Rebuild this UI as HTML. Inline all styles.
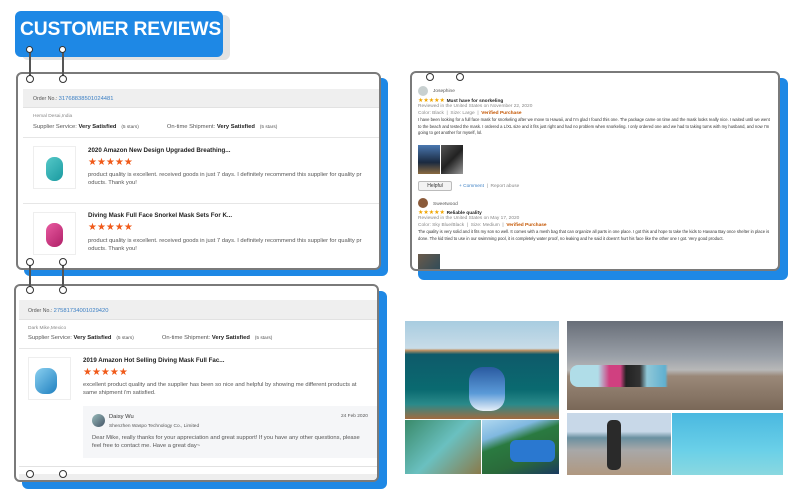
<!DOCTYPE html>
<html><head><meta charset="utf-8"><style>
*{margin:0;padding:0;box-sizing:border-box}
body{width:800px;height:503px;background:#fff;position:relative;overflow:hidden;font-family:"Liberation Sans",sans-serif;color:#333}
.a{position:absolute;white-space:nowrap}
.blue{position:absolute;background:#1e88e5;border-radius:6px}
.card{position:absolute;background:#fff;border:2px solid #7a7a7a;border-radius:6px;overflow:hidden}
.ring{position:absolute;width:8px;height:8px;border:1.5px solid #333;border-radius:50%;background:#fff}
.vl{position:absolute;width:1.5px;background:#555}
.st{color:#f05a1a;font-size:10px;letter-spacing:0px}
.ys{color:#f0a500;font-size:6px}
.t7{font-size:5.8px;color:#555}
.b7{font-size:6.2px;font-weight:bold;color:#222}
.s5{font-size:4.8px;color:#888}
.r5{font-size:4.2px;color:#333;line-height:6.7px;white-space:normal}
</style></head><body>

<!-- title -->
<div class="a" style="left:22px;top:15px;width:208px;height:45px;background:#e3e3e3;border-radius:6px"></div>
<div class="blue" style="left:15px;top:11px;width:208px;height:46px"></div>
<div class="a" style="left:20px;top:19px;font-size:19.3px;font-weight:bold;color:#fff;letter-spacing:-0.2px">CUSTOMER REVIEWS</div>

<!-- card 1 -->
<div class="blue" style="left:24px;top:78px;width:364px;height:198px"></div>
<div class="card" style="left:16px;top:72px;width:365px;height:198px">
  <div class="a" style="left:5px;top:15px;width:360px;height:19px;background:#efefef;border-bottom:1px solid #e2e2e2"></div>
  <div class="a t7" style="left:15px;top:22px;font-size:5.2px">Order No.: <span style="color:#3b7fc4;font-size:5.8px">31768838501024481</span></div>
  <div class="a s5" style="left:15px;top:40px">Hemal Desai,India</div>
  <div class="a t7" style="left:15px;top:50px">Supplier Service: <b style="color:#222">Very Satisfied</b> &nbsp; <span style="font-size:4.8px">(5 stars)</span><span style="margin-left:28px">On-time Shipment: <b style="color:#222">Very Satisfied</b> &nbsp; <span style="font-size:4.8px">(5 stars)</span></span></div>
  <div class="a" style="left:5px;top:63px;width:360px;height:1px;background:#e6e6e6"></div>
  <div class="a" style="left:15px;top:72px;width:43px;height:43px;border:1px solid #eee;background:#fff">
    <div class="a" style="left:12px;top:10px;width:17px;height:24px;border-radius:8px;background:linear-gradient(135deg,#55c8c8,#1a9aa0)"></div>
  </div>
  <div class="a b7" style="left:70px;top:73px">2020 Amazon New Design Upgraded Breathing...</div>
  <div class="a st" style="left:70px;top:83px">★★★★★</div>
  <div class="a t7" style="left:70px;top:97px;line-height:8px">product quality is excellent. received goods in just 7 days. I definitely recommend this supplier for quality pr<br>oducts. Thank you!</div>
  <div class="a" style="left:5px;top:129px;width:360px;height:1px;background:#e6e6e6"></div>
  <div class="a" style="left:15px;top:138px;width:43px;height:43px;border:1px solid #eee;background:#fff">
    <div class="a" style="left:12px;top:10px;width:17px;height:24px;border-radius:8px;background:linear-gradient(135deg,#e85aa0,#b02068)"></div>
  </div>
  <div class="a b7" style="left:70px;top:138px">Diving Mask Full Face Snorkel Mask Sets For K...</div>
  <div class="a st" style="left:70px;top:148px">★★★★★</div>
  <div class="a t7" style="left:70px;top:163px;line-height:8px">product quality is excellent. received goods in just 7 days. I definitely recommend this supplier for quality pr<br>oducts. Thank you!</div>
</div>

<!-- card 2 right -->
<div class="blue" style="left:418px;top:78px;width:370px;height:202px"></div>
<div class="card" style="left:410px;top:71px;width:370px;height:200px">
  <div class="a" style="left:6px;top:13px;width:10px;height:10px;border-radius:50%;background:#c8d0d0"></div>
  <div class="a s5" style="left:21px;top:16px;color:#555">Josephine</div>
  <div class="a ys" style="left:6px;top:24px">★★★★★ <b style="color:#222;font-size:4.8px">Must have for snorkeling</b></div>
  <div class="a s5" style="left:6px;top:31px">Reviewed in the United States on November 22, 2020</div>
  <div class="a s5" style="left:6px;top:38px">Color: Black &nbsp;|&nbsp; Size: Large &nbsp;|&nbsp; <b style="color:#c45500">Verified Purchase</b></div>
  <div class="a r5" style="left:6px;top:44px;width:356px">I have been looking for a full face mask for snorkeling after we move to Hawaii, and I'm glad I found this one. The package came on time and the mask looks really nice. I waited until we went to the beach and tested the mask. I ordered a L/XL size and it fits just right and had no problem when snorkeling. I only ordered one and we had to taking turns with my husband, and now I'm going to get another for myself, lol.</div>
  <div class="a" style="left:6px;top:72px;width:22px;height:29px;background:linear-gradient(180deg,#4a78b0,#1a2a40 60%,#8a6a40)"></div>
  <div class="a" style="left:29px;top:72px;width:22px;height:29px;background:linear-gradient(135deg,#555,#222 50%,#999)"></div>
  <div class="a" style="left:6px;top:108px;width:34px;height:10px;border:1px solid #bbb;border-radius:2px;background:#f3f3f3;font-size:5px;text-align:center;line-height:8px">Helpful</div>
  <div class="a s5" style="left:47px;top:111px"><span style="color:#3b7fc4">+ Comment</span> &nbsp;|&nbsp; Report abuse</div>
  <div class="a" style="left:6px;top:125px;width:10px;height:10px;border-radius:50%;background:#8a5a3a"></div>
  <div class="a s5" style="left:21px;top:129px;color:#555">Sweetwood</div>
  <div class="a ys" style="left:6px;top:136px">★★★★★ <b style="color:#222;font-size:4.8px">Reliable quality</b></div>
  <div class="a s5" style="left:6px;top:143px">Reviewed in the United States on May 17, 2020</div>
  <div class="a s5" style="left:6px;top:150px">Color: Sky Blue/Black &nbsp;|&nbsp; Size: Medium &nbsp;|&nbsp; <b style="color:#c45500">Verified Purchase</b></div>
  <div class="a r5" style="left:6px;top:156px;width:356px">The quality is very solid and it fits my son so well. It comes with a mesh bag that can organize all parts in one place. I got this and hope to take the kids to Havana Bay once shelter in place is done. The kid tried to use in our swimming pool, it is completely water proof, no leaking and he said it doesn't hurt his face like the other one I got. Very good product.</div>
  <div class="a" style="left:6px;top:181px;width:22px;height:20px;background:linear-gradient(135deg,#6a5a4a,#2a4a5a)"></div>
</div>

<!-- card 3 -->
<div class="blue" style="left:22px;top:291px;width:365px;height:198px"></div>
<div class="card" style="left:14px;top:284px;width:365px;height:198px">
  <div class="a" style="left:3px;top:14px;width:360px;height:20px;background:#efefef;border-bottom:1px solid #e2e2e2"></div>
  <div class="a t7" style="left:12px;top:22px;font-size:5.2px">Order No.: <span style="color:#3b7fc4;font-size:5.8px">27581734001029420</span></div>
  <div class="a s5" style="left:12px;top:40px">Dark Mike,Mexico</div>
  <div class="a t7" style="left:12px;top:49px">Supplier Service: <b style="color:#222">Very Satisfied</b> &nbsp; <span style="font-size:4.8px">(5 stars)</span><span style="margin-left:28px">On-time Shipment: <b style="color:#222">Very Satisfied</b> &nbsp; <span style="font-size:4.8px">(5 stars)</span></span></div>
  <div class="a" style="left:3px;top:62px;width:360px;height:1px;background:#e6e6e6"></div>
  <div class="a" style="left:12px;top:71px;width:43px;height:43px;border:1px solid #eee;background:#fff">
    <div class="a" style="left:6px;top:10px;width:22px;height:26px;border-radius:9px;background:linear-gradient(135deg,#8ad0f0,#2080c0)"></div>
  </div>
  <div class="a b7" style="left:67px;top:71px">2019 Amazon Hot Selling Diving Mask Full Fac...</div>
  <div class="a st" style="left:67px;top:81px">★★★★★</div>
  <div class="a t7" style="left:67px;top:95px;line-height:8px">excellent product quality and the supplier has been so nice and helpful by showing me different products at<br>same shipment i'm satisfied.</div>
  <div class="a" style="left:67px;top:120px;width:296px;height:52px;background:#f5f6f8"></div>
  <div class="a" style="left:76px;top:128px;width:13px;height:13px;border-radius:50%;background:linear-gradient(135deg,#9bb,#456)"></div>
  <div class="a" style="left:93px;top:128px;font-size:5.8px;color:#333">Daisy Wu</div>
  <div class="a s5" style="left:93px;top:138px;color:#555">Shenzhen Waspo Technology Co., Limited</div>
  <div class="a s5" style="left:325px;top:128px;color:#555">24 Feb 2020</div>
  <div class="a t7" style="left:76px;top:148px;line-height:8px">Dear Mike, really thanks for your appreciation and great support! If you have any other questions, please<br>feel free to contact me. Have a great day~</div>
  <div class="a" style="left:3px;top:180px;width:360px;height:1px;background:#e2e2e2"></div>
  <div class="a" style="left:3px;top:188px;width:360px;height:10px;background:#eee"></div>
</div>

<!-- rings -->
<div class="vl" style="left:29px;top:50px;height:28px"></div>
<div class="vl" style="left:62px;top:50px;height:28px"></div>
<div class="ring" style="left:26px;top:46px;width:7px;height:7px"></div>
<div class="ring" style="left:59px;top:46px;width:7px;height:7px"></div>
<div class="ring" style="left:26px;top:75px"></div>
<div class="ring" style="left:59px;top:75px"></div>
<div class="vl" style="left:29px;top:262px;height:28px"></div>
<div class="vl" style="left:62px;top:262px;height:28px"></div>
<div class="ring" style="left:26px;top:258px"></div>
<div class="ring" style="left:59px;top:258px"></div>
<div class="ring" style="left:26px;top:286px"></div>
<div class="ring" style="left:59px;top:286px"></div>
<div class="ring" style="left:26px;top:470px"></div>
<div class="ring" style="left:59px;top:470px"></div>
<div class="ring" style="left:426px;top:73px"></div>
<div class="ring" style="left:456px;top:73px"></div>

<!-- photos -->
<div class="a" style="left:405px;top:321px;width:154px;height:98px;background:linear-gradient(180deg,#a8cce0 0%,#c8dce8 28%,#c09060 30%,#0e5a6a 34%,#0a6a70 70%,#2a8a8a 85%,#a06a40 100%)"></div>
<div class="a" style="left:469px;top:367px;width:36px;height:44px;border-radius:14px;background:linear-gradient(180deg,#2a5aa0,#5a9ad8 60%,#e8f0f8)"></div>
<div class="a" style="left:405px;top:420px;width:76px;height:54px;background:linear-gradient(135deg,#3a8a6a,#6ac0c0 50%,#8a7a4a)"></div>
<div class="a" style="left:482px;top:420px;width:77px;height:54px;background:linear-gradient(160deg,#b0d8f0 0%,#80b8e0 25%,#2a7a40 40%,#2a6a3a 70%,#1a3a60)"></div>
<div class="a" style="left:510px;top:440px;width:45px;height:22px;border-radius:6px;background:#2a78d0"></div>
<div class="a" style="left:567px;top:321px;width:216px;height:89px;background:linear-gradient(180deg,#686e78 0%,#9aa0a8 40%,#b8b8b8 55%,#9a8878 62%,#7a6858 100%)"></div>
<div class="a" style="left:570px;top:365px;width:140px;height:22px;background:linear-gradient(90deg,#b0dde8 0%,#b0dde8 20%,#d04080 28%,#d04080 36%,#222 40%,#333 50%,#90c8d8 55%,#60b0d0 68%,transparent 70%);border-radius:8px"></div>
<div class="a" style="left:567px;top:413px;width:104px;height:62px;background:linear-gradient(180deg,#c8d8e8 0%,#c8d8e8 30%,#6a90a0 40%,#a8a8a8 60%,#b09880 100%)"></div>
<div class="a" style="left:607px;top:420px;width:14px;height:50px;background:#2a2a2a;border-radius:5px"></div>
<div class="a" style="left:672px;top:413px;width:111px;height:62px;background:linear-gradient(180deg,#4ab8e0,#6ad0e8 60%,#8ad8e0)"></div>
</body></html>
